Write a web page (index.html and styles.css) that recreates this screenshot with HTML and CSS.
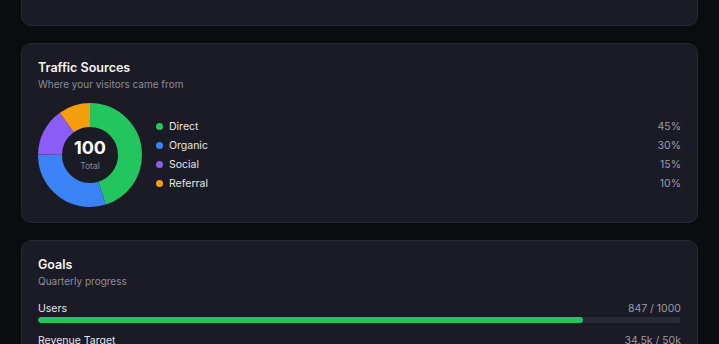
FILE: index.html
```html
<!DOCTYPE html>
<html lang="en">
<head>
<meta charset="utf-8">
<title>Dashboard</title>
<link rel="stylesheet" href="styles.css">
</head>
<body>
<main class="page">
  <section class="card card-partial"></section>

  <section class="card">
    <h2 class="card-title">Traffic Sources</h2>
    <p class="card-sub">Where your visitors came from</p>
    <div class="traffic">
      <div class="donut">
        <svg width="104" height="104" viewBox="0 0 104 104">
          <g transform="rotate(-90 52 52)" fill="none" stroke-width="24">
            <circle cx="52" cy="52" r="40" stroke="#22c55e" stroke-dasharray="113.10 251.33" stroke-dashoffset="0"/>
            <circle cx="52" cy="52" r="40" stroke="#3b82f6" stroke-dasharray="75.40 251.33" stroke-dashoffset="-113.10"/>
            <circle cx="52" cy="52" r="40" stroke="#8b5cf6" stroke-dasharray="37.70 251.33" stroke-dashoffset="-188.50"/>
            <circle cx="52" cy="52" r="40" stroke="#f59e0b" stroke-dasharray="25.13 251.33" stroke-dashoffset="-226.20"/>
          </g>
        </svg>
        <div class="donut-center">
          <span class="donut-num">100</span>
          <span class="donut-lbl">Total</span>
        </div>
      </div>
      <ul class="legend">
        <li class="legend-row"><span class="legend-name"><i class="dot dot-green"></i>Direct</span><span class="legend-pct">45%</span></li>
        <li class="legend-row"><span class="legend-name"><i class="dot dot-blue"></i>Organic</span><span class="legend-pct">30%</span></li>
        <li class="legend-row"><span class="legend-name"><i class="dot dot-purple"></i>Social</span><span class="legend-pct">15%</span></li>
        <li class="legend-row"><span class="legend-name"><i class="dot dot-amber"></i>Referral</span><span class="legend-pct">10%</span></li>
      </ul>
    </div>
  </section>

  <section class="card">
    <h2 class="card-title">Goals</h2>
    <p class="card-sub">Quarterly progress</p>
    <div class="goals">
      <div class="goal">
        <div class="goal-head"><span class="goal-name">Users</span><span class="goal-val">847 / 1000</span></div>
        <div class="bar"><div class="bar-fill" style="width:84.7%"></div></div>
      </div>
      <div class="goal">
        <div class="goal-head"><span class="goal-name">Revenue Target</span><span class="goal-val">34.5k / 50k</span></div>
        <div class="bar"><div class="bar-fill" style="width:69%"></div></div>
      </div>
    </div>
  </section>
</main>
</body>
</html>
```

FILE: styles.css
```css
* { box-sizing: border-box; }
html, body { margin: 0; padding: 0; }
body {
  background: #0b0c10;
  font-family: Inter, "Noto Sans", sans-serif;
  color: #f3f4f6;
  overflow: hidden;
}
.page {
  padding: 0 21px;
  display: flex;
  flex-direction: column;
  gap: 17px;
}
.card {
  background: #1a1b24;
  border: 1px solid #272833;
  border-radius: 10px;
  padding: 16px 16px 15px;
}
.card-partial {
  height: 26px;
  border-top: none;
  border-radius: 0 0 10px 10px;
  padding: 0;
}
.card-title {
  margin: 0;
  font-size: 12.5px;
  line-height: 16px;
  font-weight: 600;
  color: #f3f4f6;
}
.card-sub {
  margin: 0;
  font-size: 10px;
  line-height: 16px;
  color: #8b8d9a;
}
.traffic {
  margin-top: 11px;
  display: flex;
  align-items: center;
  gap: 14px;
}
.donut {
  position: relative;
  width: 104px;
  height: 104px;
  flex: none;
}
.donut svg { display: block; }
.donut-center {
  position: absolute;
  inset: 0;
  display: flex;
  flex-direction: column;
  align-items: center;
  justify-content: center;
}
.donut-num {
  font-size: 18px;
  line-height: 20px;
  font-weight: 700;
  color: #ffffff;
}
.donut-lbl {
  margin-top: 2px;
  font-size: 8.5px;
  line-height: 12px;
  color: #8b8d9a;
}
.legend {
  list-style: none;
  margin: 0;
  padding: 0;
  flex: 1;
  display: flex;
  flex-direction: column;
  gap: 3px;
}
.legend-row {
  display: flex;
  justify-content: space-between;
  align-items: center;
  font-size: 10.5px;
  line-height: 16px;
}
.legend-name {
  display: flex;
  align-items: center;
  gap: 6px;
  color: #e5e7eb;
}
.legend-pct { color: #9a9cab; }
.dot {
  width: 7px;
  height: 7px;
  border-radius: 50%;
  display: inline-block;
}
.dot-green { background: #22c55e; }
.dot-blue { background: #3b82f6; }
.dot-purple { background: #8b5cf6; }
.dot-amber { background: #f59e0b; }
.goals {
  margin-top: 12px;
  display: flex;
  flex-direction: column;
  gap: 10px;
}
.goal-head {
  display: flex;
  justify-content: space-between;
  font-size: 10.5px;
  line-height: 16px;
  margin-bottom: 0;
}
.goal-name { color: #e5e7eb; }
.goal-val { color: #9a9cab; }
.bar {
  height: 6px;
  border-radius: 3px;
  background: #2a2b36;
  overflow: hidden;
}
.bar-fill {
  height: 100%;
  border-radius: 3px;
  background: #22c55e;
}
```
